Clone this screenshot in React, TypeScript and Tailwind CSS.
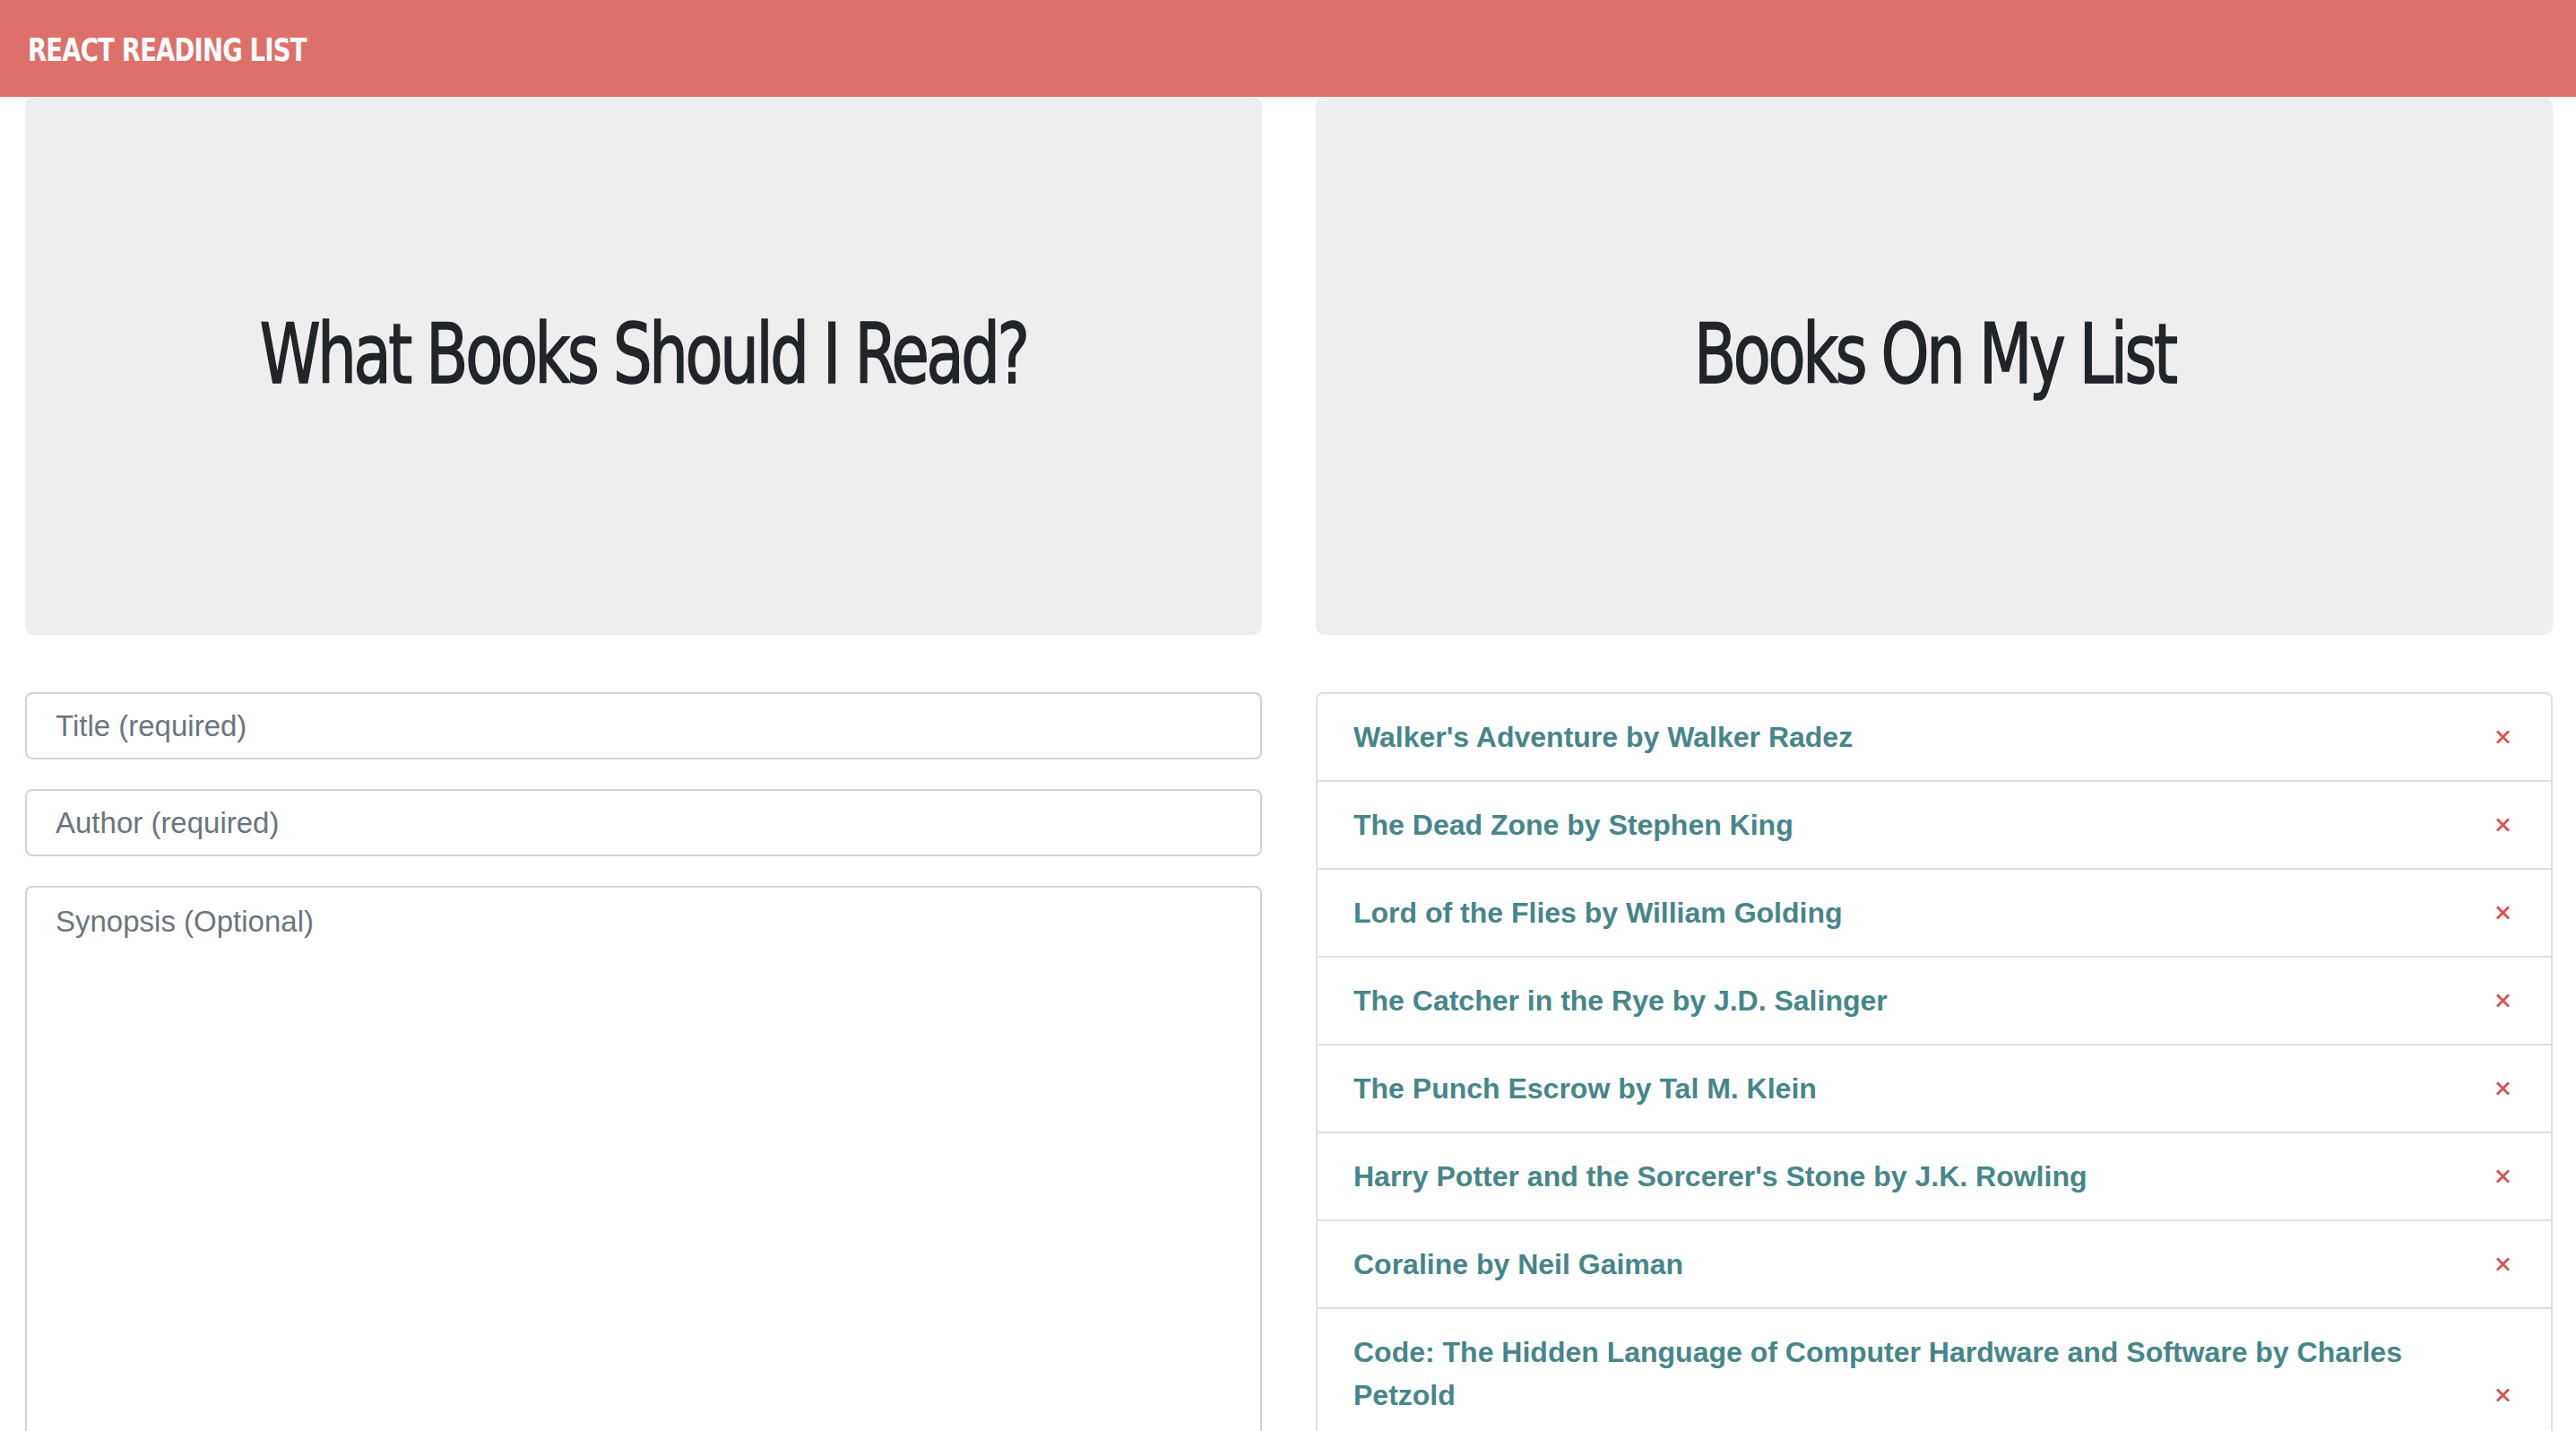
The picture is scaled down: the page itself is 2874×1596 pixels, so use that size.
import React from "react";

const books = [
  "Walker's Adventure by Walker Radez",
  "The Dead Zone by Stephen King",
  "Lord of the Flies by William Golding",
  "The Catcher in the Rye by J.D. Salinger",
  "The Punch Escrow by Tal M. Klein",
  "Harry Potter and the Sorcerer's Stone by J.K. Rowling",
  "Coraline by Neil Gaiman",
  "Code: The Hidden Language of Computer Hardware and Software by Charles Petzold",
];

const narrow =
  "font-['Liberation_Sans_Narrow','DejaVu_Sans_Condensed','Roboto_Condensed',sans-serif] font-stretch-condensed";
const body = "font-['Liberation_Sans','Helvetica_Neue',Arial,sans-serif]";

function Jumbotron({ title }: { title: string }) {
  return (
    <div className="h-[600px] rounded-[10px] bg-[#eeeeee] flex items-center justify-center pb-[24px]">
      <h1
        className={`${narrow} text-[92px] leading-none tracking-[-4px] text-[#212529] scale-x-[0.83] [-webkit-text-stroke:1.5px_#212529]`}
      >
        {title}
      </h1>
    </div>
  );
}

function RemoveIcon() {
  return (
    <span className="h-[48px] w-[22px] flex items-center justify-end shrink-0">
      <svg width="17" height="16" viewBox="0 0 17 16">
        <path
          d="M2 1.5 L15 14.5 M15 1.5 L2 14.5"
          stroke="#d9534f"
          strokeWidth="3"
        />
      </svg>
    </span>
  );
}

function BookForm() {
  const inputCls = `${body} w-full h-[75px] border-2 border-[#ced4da] rounded-[8px] px-[32px] text-[33px] leading-[48px] text-[#495057] placeholder:text-[#6c757d] bg-white outline-none`;
  return (
    <form className="flex flex-col gap-[33px] mt-[64px]">
      <input className={inputCls} placeholder="Title (required)" />
      <input className={inputCls} placeholder="Author (required)" />
      <textarea
        className={`${body} w-full h-[760px] border-2 border-[#ced4da] rounded-[8px] px-[32px] py-[14px] text-[33px] leading-[48px] text-[#495057] placeholder:text-[#6c757d] bg-white outline-none resize-none`}
        placeholder="Synopsis (Optional)"
      />
    </form>
  );
}

function BookList() {
  return (
    <ul className="mt-[64px] border-2 border-[#dfdfdf] rounded-[8px] flex flex-col">
      {books.map((b, i) => (
        <li
          key={b}
          className={`flex items-end justify-between gap-4 pl-[40px] pr-[45px] py-[24px] ${
            i > 0 ? "border-t-2 border-[#dfdfdf]" : ""
          }`}
        >
          <span
            className={`${body} text-[32px] leading-[48px] font-bold text-[#468689]`}
          >
            {b}
          </span>
          <RemoveIcon />
        </li>
      ))}
    </ul>
  );
}

export default function App() {
  return (
    <div className="h-screen overflow-hidden bg-white">
      <header className="h-[108px] bg-[#dd7069] flex items-center px-[31px]">
        <span
          className={`${narrow} text-[36px] leading-none font-bold tracking-[-1px] text-white pt-[4px] origin-left scale-x-[0.85]`}
        >
          REACT READING LIST
        </span>
      </header>
      <main className="grid grid-cols-2 gap-[60px] pl-[28px] pr-[26px]">
        <section>
          <Jumbotron title="What Books Should I Read?" />
          <BookForm />
        </section>
        <section>
          <Jumbotron title="Books On My List" />
          <BookList />
        </section>
      </main>
    </div>
  );
}
